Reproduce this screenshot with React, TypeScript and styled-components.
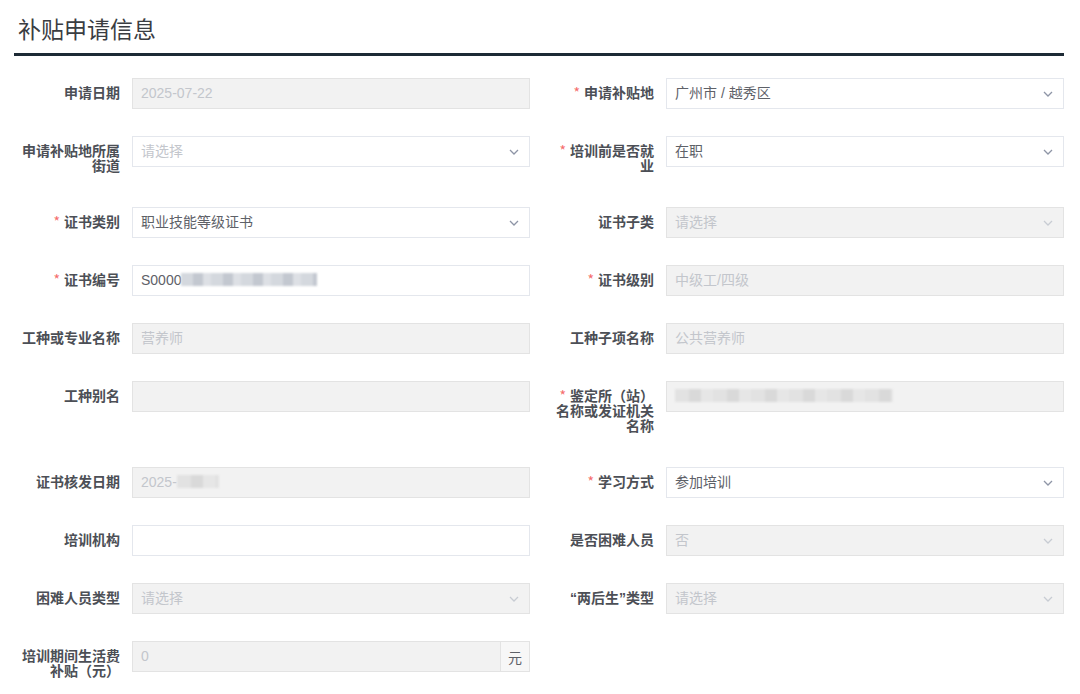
import React from 'react';
import styled, {createGlobalStyle} from 'styled-components';

const GlobalStyle = createGlobalStyle`
  html, body {
    margin: 0;
    padding: 0;
    background: #fff;
  }
  body {
    font-family: "Liberation Sans", "Noto Sans CJK SC", sans-serif;
  }
`;

type Kind = 'select' | 'input' | 'append';

interface IField {
  label: React.ReactNode;
  id: string;
  required?: boolean;
  kind: Kind;
  value?: string;
  placeholder?: string;
  disabled?: boolean;
  blur?: {width: number; light?: boolean};
  empty?: boolean;
}

const Quote = styled.span`
  font-family: "Liberation Sans", sans-serif;
`;

const fields: IField[] = [
  {id: 'a', label: '申请日期', kind: 'input', value: '2025-07-22', disabled: true},
  {id: 'b', label: '申请补贴地', required: true, kind: 'select', value: '广州市 / 越秀区'},
  {id: 'c', label: '申请补贴地所属街道', kind: 'select', placeholder: '请选择'},
  {id: 'd', label: '培训前是否就业', required: true, kind: 'select', value: '在职'},
  {id: 'e', label: '证书类别', required: true, kind: 'select', value: '职业技能等级证书'},
  {id: 'f', label: '证书子类', kind: 'select', placeholder: '请选择', disabled: true},
  {id: 'g', label: '证书编号', required: true, kind: 'input', value: 'S0000', blur: {width: 136}},
  {id: 'h', label: '证书级别', required: true, kind: 'input', value: '中级工/四级', disabled: true},
  {id: 'i', label: '工种或专业名称', kind: 'input', value: '营养师', disabled: true},
  {id: 'j', label: '工种子项名称', kind: 'input', value: '公共营养师', disabled: true},
  {id: 'k', label: '工种别名', kind: 'input', disabled: true, empty: true},
  {id: 'l', label: '鉴定所（站）名称或发证机关名称', required: true, kind: 'input', disabled: true, value: '', blur: {width: 218, light: true}},
  {id: 'm', label: '证书核发日期', kind: 'input', value: '2025-', disabled: true, blur: {width: 42, light: true}},
  {id: 'n', label: '学习方式', required: true, kind: 'select', value: '参加培训'},
  {id: 'o', label: '培训机构', kind: 'input', empty: true},
  {id: 'p', label: '是否困难人员', kind: 'select', value: '否', disabled: true},
  {id: 'q', label: '困难人员类型', kind: 'select', placeholder: '请选择', disabled: true},
  {
    id: 'r',
    label: (
      <>
        <Quote>“</Quote>两后生<Quote>”</Quote>类型
      </>
    ),
    kind: 'select',
    placeholder: '请选择',
    disabled: true,
  },
  {id: 's', label: '培训期间生活费补贴（元）', kind: 'append', value: '0', disabled: true},
];

const Page = styled.div`
  width: 1050px;
  padding: 0 0 0 14px;
`;

const Header = styled.div`
  padding: 13px 0 10px 4px;
  border-bottom: 3px solid #1d2a35;
`;

const Title = styled.h2`
  margin: 0;
  font-size: 23px;
  line-height: 30px;
  font-weight: normal;
  color: #3a3d42;
  font-family: "Noto Sans CJK SC", sans-serif;
`;

const FormGrid = styled.div`
  margin-top: 22px;
  display: grid;
  grid-template-columns: 516px 516px;
  column-gap: 18px;
  row-gap: 27px;
  align-items: start;
`;

const Item = styled.div`
  display: flex;
  align-items: flex-start;
`;

const Label = styled.label`
  flex: 0 0 118px;
  box-sizing: border-box;
  padding: 7px 12px 7px 0;
  text-align: right;
  font-size: 14px;
  line-height: 15px;
  font-weight: bold;
  color: #4c4f56;
  font-family: "Noto Sans CJK SC", sans-serif;
`;

const Star = styled.span`
  color: #f56c6c;
  margin-right: 4px;
  font-weight: normal;
`;

const Box = styled.div<{$disabled?: boolean}>`
  flex: 1;
  height: 31px;
  box-sizing: border-box;
  display: flex;
  align-items: center;
  border: 1px solid ${p => (p.$disabled ? '#e3e3e3' : '#e4e7ed')};
  background: ${p => (p.$disabled ? '#f2f2f2' : '#fff')};
  overflow: hidden;
`;

const Text = styled.span<{$muted?: boolean}>`
  flex: 1;
  display: flex;
  align-items: center;
  padding: 0 8px 2px;
  font-size: 14px;
  line-height: 18px;
  color: ${p => (p.$muted ? '#c3c6cc' : '#5e6168')};
  white-space: nowrap;
`;

const Blurred = styled.span<{$w: number; $light?: boolean}>`
  display: inline-block;
  width: ${p => p.$w}px;
  height: 13px;
  background: ${p =>
    p.$light
      ? 'repeating-linear-gradient(90deg, #e2e2e2 0 14px, #d9d9d9 14px 26px, #e6e6e6 26px 38px)'
      : 'repeating-linear-gradient(90deg, #d4d8de 0 12px, #c3c8d0 12px 22px, #dde0e5 22px 30px)'};
  filter: blur(1.2px);
`;

const Chevron = styled.svg<{$disabled?: boolean}>`
  flex: 0 0 auto;
  margin-right: 10px;
  color: ${p => (p.$disabled ? '#c8ccd3' : '#8e95a6')};
`;

const Append = styled.span`
  flex: 0 0 28px;
  align-self: stretch;
  display: flex;
  align-items: center;
  justify-content: center;
  border-left: 1px solid #e3e3e3;
  background: #f7f7f7;
  font-size: 14px;
  color: #5e6168;
  font-family: "Noto Sans CJK SC", sans-serif;
`;

const Field: React.FC<{f: IField}> = ({f}) => {
  const shown = f.value || f.placeholder || '';
  const muted = !!f.disabled || (!f.value && !!f.placeholder);
  return (
    <Item>
      <Label>
        {f.required && <Star>*</Star>}
        {f.label}
      </Label>
      <Box $disabled={f.disabled}>
        <Text $muted={muted}>
          {!f.empty && shown}
          {f.blur && <Blurred $w={f.blur.width} $light={f.blur.light} />}
        </Text>
        {f.kind === 'select' && (
          <Chevron $disabled={f.disabled} width="10" height="6" viewBox="0 0 10 6">
            <path d="M1 1 L5 5 L9 1" fill="none" stroke="currentColor" strokeWidth="1.3" />
          </Chevron>
        )}
        {f.kind === 'append' && <Append>元</Append>}
      </Box>
    </Item>
  );
};

export default function App() {
  return (
    <Page>
      <GlobalStyle />
      <Header>
        <Title>补贴申请信息</Title>
      </Header>
      <FormGrid>
        {fields.map(f => (
          <Field key={f.id} f={f} />
        ))}
      </FormGrid>
    </Page>
  );
}
